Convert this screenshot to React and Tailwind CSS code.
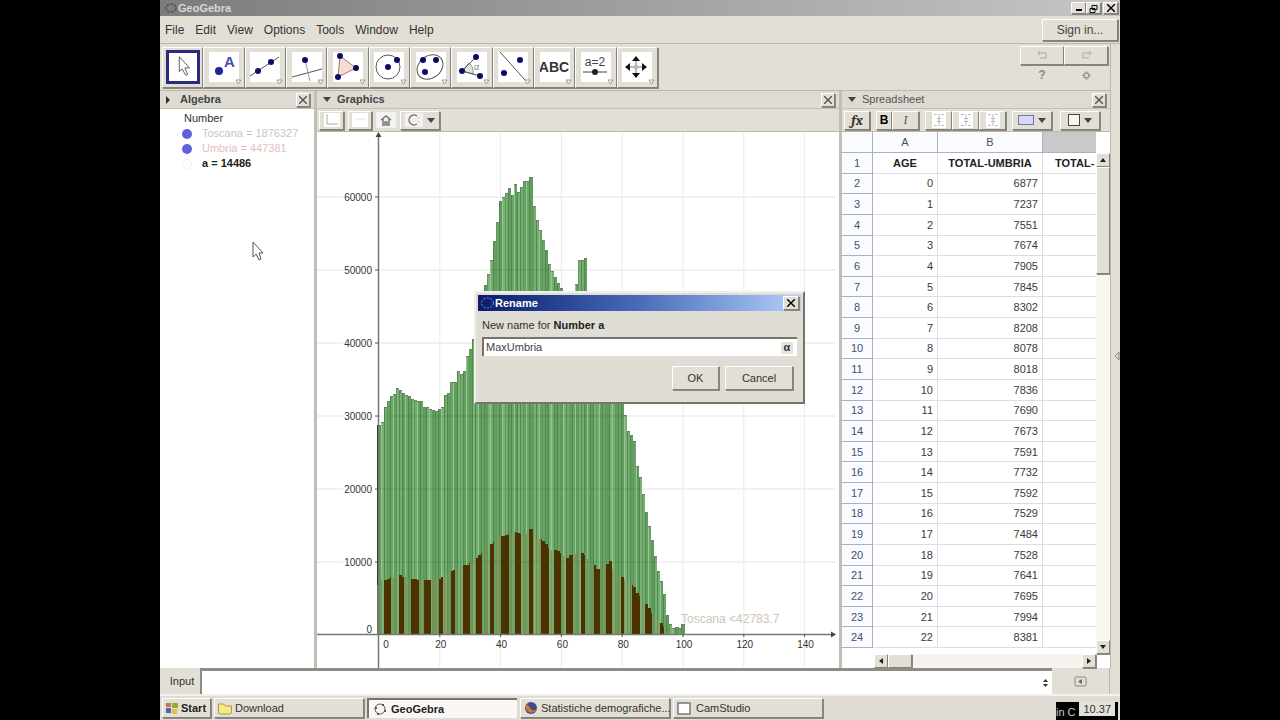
import { useState } from 'react'

const BTN = 'border border-t-white border-l-white border-r-[#858178] border-b-[#858178] bg-[#e2dfd7] shadow-[1px_1px_0_#8d897f]'

const MENUS = ['File', 'Edit', 'View', 'Options', 'Tools', 'Window', 'Help']

// residents per year of age, in thousands
const TOSCANA = [
  28.7, 29.2, 31.3, 32, 32.7, 33, 33.9, 33.6, 33.1, 32.9, 32.8, 32.3, 32.2, 32.1, 32, 31.2, 31.2, 31, 30.8, 30.7,
  31, 31.3, 32.9, 33.2, 34.7, 34.7, 36.2, 35.8, 36.2, 38.2, 39.2, 40.6, 42.5, 44.5, 46.2, 48, 49.4, 51.4, 54, 56.6,
  59.5, 60, 60.6, 61.2, 60.3, 61.8, 60.7, 61.4, 62.2, 62.2, 62.8, 58.7, 56.8, 55.5, 54.1, 52.7, 50.8, 49.8, 49, 48.2,
  47.5, 46, 44, 43, 45, 48.1, 51.4, 51.4, 51.6, 47, 45, 43, 42, 41, 42, 41, 40, 39, 38, 36,
  34, 30.1, 28, 27.4, 26.6, 23.2, 21.6, 19.3, 16.8, 14.9, 13, 10.8, 8.7, 7.4, 5.6, 2.7, 1.5, 1, 1.1, 0.9, 1.5,
]

const UMBRIA = [
  6.9, 7.5, 7.6, 7.7, 7.9, 7.8, 8.1, 8.2, 8, 7.9, 7.8, 7.7, 7.7, 7.6, 7.7, 7.6, 7.5, 7.5, 7.5, 7.6,
  7.7, 8, 8.4, 8.4, 8.7, 8.9, 9.1, 9.3, 9.6, 9.6, 9.8, 10.2, 10.5, 10.9, 11.2, 11.6, 12.1, 12.5, 12.8, 13.2,
  13.5, 13.6, 13.7, 13.8, 13.9, 14.1, 14, 13.8, 13.7, 13.9, 14.5, 13.5, 13.3, 13.1, 12.9, 12.4, 11.9, 11.7, 11.6, 11.5,
  11.3, 10.8, 10.6, 10.9, 11, 11.1, 11.3, 11.3, 10.9, 10.4, 10, 9.6, 9, 9.1, 9.2, 9.7, 10.1, 9, 8.6, 8.3,
  8, 7.6, 7.2, 6.9, 6.6, 5.7, 5.3, 4.8, 4.3, 3.7, 3, 2.6, 2.1, 1.7, 1.1, 0.6, 0.3, 0.2, 0.2, 0.1, 0.1,
]

// age ranges where the Umbria bars are solid
const SOLID = [
  [1.6, 4.1], [6.7, 8.1], [10.6, 13.2], [14.8, 17.2], [19.7, 21.2], [23.8, 25.1], [27.7, 29.8], [31.8, 33.9],
  [36.5, 37.9], [40.2, 42.9], [44.6, 46.8], [49.5, 50.8], [53.4, 55.8], [57.6, 60], [61.5, 63.9], [66.6, 67.9],
  [70.6, 72.7], [74.7, 76.6], [79.5, 80.6], [83.3, 85.7], [87.6, 89.7], [92.5, 93.7],
]

// gridlines that show through the bars: [thousands, first age, last age]
const OVERLAY = [[10, 0, 91], [20, 0, 86], [30, 2, 81], [40, 31, 56], [50, 37, 56]]

const GREENS = ['#619c5e', '#76ac71', '#6ca569', '#7bb076', '#649e61']

const SHEET = [
  6877, 7237, 7551, 7674, 7905, 7845, 8302, 8208, 8078, 8018, 7836, 7690, 7673, 7591, 7732, 7592, 7529, 7484, 7528,
  7641, 7695, 7994, 8381,
]

const px = (age) => 62 + age * 3.04
const py = (k) => 503 - k * 7.3

const NAVY = '#0c0c66'
const Dot = ({ x, y, r = 3, fill = NAVY }) => <circle cx={x} cy={y} r={r} fill={fill} />
const Ln = ({ d, stroke = '#555' }) => <path d={d} stroke={stroke} fill="none" />

const TOOLS = [
  { name: 'Move', icon: <path d="M11 5v16l3-3 4 7 2-1-3-7h5z" fill="#fff" stroke="#555" /> },
  {
    name: 'Point',
    icon: (
      <>
        <Dot x={10} y={20} r={4} fill="#22229a" />
        <text x={15} y={16} fontSize={15} fontWeight="bold" fill="#4a4ab0">A</text>
      </>
    ),
  },
  { name: 'Line', icon: <><Ln d="M0 25L29 6" /><Dot x={8} y={20} /><Dot x={21} y={11} /></> },
  { name: 'Perpendicular Line', icon: <><Ln d="M0 26L30 18" /><Ln d="M13 9l5 21" stroke="#999" /><Dot x={13} y={9} /></> },
  {
    name: 'Polygon',
    icon: (
      <>
        <path d="M7 5l16 12L5 26z" fill="#f5ddd0" stroke="#997b70" />
        <Dot x={7} y={5} /><Dot x={23} y={17} /><Dot x={5} y={26} />
      </>
    ),
  },
  { name: 'Circle', icon: <><circle cx={14} cy={16} r={12} fill="none" stroke="#555" /><Dot x={14} y={16} /><Dot x={23} y={9} /></> },
  {
    name: 'Conic',
    icon: (
      <>
        <ellipse cx={14} cy={16} rx={14} ry={11} fill="none" stroke="#555" transform="rotate(-38 14 16)" />
        <Dot x={7} y={9} /><Dot x={20} y={9} /><Dot x={9} y={21} />
      </>
    ),
  },
  {
    name: 'Angle',
    icon: (
      <>
        <path d="M5 20l7-8q5 4 4 11z" fill="#dfe8df" stroke="#8a9a8a" />
        <Ln d="M19 6L5 20l18 5" />
        <text x={17} y={19} fontSize={9} fill="#888">α</text>
        <Dot x={19} y={6} /><Dot x={5} y={20} /><Dot x={23} y={25} />
      </>
    ),
  },
  { name: 'Reflect', icon: <><Ln d="M2 1l25 28" /><Dot x={22} y={9} /><Dot x={6} y={22} /></> },
  { name: 'Text', icon: <text x={14} y={21} fontSize={14} fontWeight="bold" textAnchor="middle" fill="#333">ABC</text> },
  {
    name: 'Slider',
    icon: (
      <>
        <text x={14} y={15} fontSize={12} textAnchor="middle" fill="#444">a=2</text>
        <Ln d="M2 21h24" stroke="#444" />
        <Dot x={14} y={21} fill="#222" />
      </>
    ),
  },
  {
    name: 'Move Graphics View',
    icon: (
      <>
        <Ln d="M14 8v16M6 16h16" stroke="#777" />
        <path d="M14 5l4 5h-8zM14 27l4-5h-8zM3 16l5-4v8zM25 16l-5-4v8z" fill="#111" />
        <rect x={12} y={14} width={4} height={4} fill="#bbb" />
      </>
    ),
  },
]

function Cross({ size = 8, className = '' }) {
  return (
    <svg width={size} height={size} viewBox="0 0 8 8" className={className}>
      <path d="M0 0l8 8M8 0L0 8" stroke="currentColor" strokeWidth="1.4" />
    </svg>
  )
}

function Caret({ className = '' }) {
  return (
    <svg width="8" height="5" viewBox="0 0 8 5" className={className}>
      <path d="M0 0h8L4 5z" fill="#444" />
    </svg>
  )
}

function PanelHeader({ title, bold, closed }) {
  return (
    <div className="flex h-[18px] shrink-0 items-center border-b border-[#c4c0b7] bg-[#dedbd3] px-1">
      <span className="flex w-4 items-center pl-0.5">
        {closed ? <svg width="5" height="8"><path d="M0 0l4 4-4 4z" fill="#333" /></svg> : <Caret />}
      </span>
      <h2 className={bold ? 'flex-1 text-[11px] font-bold text-[#444]' : 'flex-1 text-[11px] text-[#555]'}>{title}</h2>
      <button aria-label={`Close ${title}`} className={`flex size-3.5 items-center justify-center text-[#555] ${BTN}`}>
        <Cross />
      </button>
    </div>
  )
}

function ToolButton({ label, className, children }) {
  return (
    <button aria-label={label} className={`flex h-[19px] items-center justify-center gap-1 ${BTN} ${className}`}>
      {children}
    </button>
  )
}

function Chart() {
  return (
    <svg className="block h-full w-full" fontSize="10" fill="#333">
      {[20, 40, 60, 80, 100, 120, 140].map((a) => (
        <path key={a} d={`M${px(a)} 0v537`} stroke="#ececec" />
      ))}
      {[10, 20, 30, 40, 50, 60].map((k) => (
        <path key={k} d={`M0 ${py(k)}h26M61 ${py(k)}h458`} stroke="#e4e4e4" />
      ))}
      <g shapeRendering="crispEdges">
        {TOSCANA.map((k, n) => (
          <g key={n}>
            <rect x={px(n - 0.5)} y={py(k)} width={3.1} height={k * 7.3} fill={GREENS[(n * 3) % 5]} />
            <rect x={px(n - 0.5)} y={py(k)} width={1} height={k * 7.3} fill={n % 4 === 1 ? '#93c98c' : n % 3 ? '#4d8a4b' : '#5f9a5c'} />
            <rect x={px(n - 0.5)} y={py(k)} width={3.1} height={1} fill="#6f7f6c" />
          </g>
        ))}
        <rect x={60} y={py(28.7)} width={2} height={28.7 * 7.3} fill="#12300f" />
        {UMBRIA.map((k, n) => (
          <rect key={n} x={px(n - 0.5)} y={py(k)} width={1} height={k * 7.3} fill="#8a8448" opacity={0.8} />
        ))}
        {SOLID.map(([from, to]) =>
          UMBRIA.map((k, n) => {
            const a = Math.max(from, n - 0.5)
            const b = Math.min(to, n + 0.5)
            if (b <= a) return null
            return <rect key={n} x={px(a)} y={py(k)} width={px(b) - px(a)} height={k * 7.3} fill="#4b3200" />
          }),
        )}
      </g>
      {OVERLAY.map(([k, from, to]) => (
        <path key={k} d={`M${px(from)} ${py(k)}H${px(to)}`} stroke="#2a5a2a" opacity={0.2} />
      ))}
      <path d="M61.5 2v535M0 502.5h516" stroke="#777" strokeWidth="1.5" fill="none" />
      <path d="M61.5 0l3 5h-6zM519 502.5l-5-3v6z" fill="#444" />
      {[10, 20, 30, 40, 50, 60].map((k) => (
        <g key={k}>
          <path d={`M58 ${py(k)}h4`} stroke="#555" />
          <text x={55} y={py(k) + 4} textAnchor="end">{k * 1000}</text>
        </g>
      ))}
      <text x={55} y={501} textAnchor="end">0</text>
      <text x={69} y={516} textAnchor="middle">0</text>
      {[20, 40, 60, 80, 100, 120, 140].map((a) => (
        <g key={a}>
          <path d={`M${px(a)} 502v3`} stroke="#555" />
          <text x={px(a) + 1} y={516} textAnchor="middle">{a}</text>
        </g>
      ))}
      <text x={364} y={491} fontSize="12" fill="#cdc5b8">{'Toscana <42783.7'}</text>
    </svg>
  )
}

function Algebra() {
  return (
    <section className="flex w-[154px] shrink-0 flex-col bg-white">
      <PanelHeader title="Algebra" bold closed />
      <ul className="pt-0.5 text-[11px] leading-[15px]">
        <li className="pl-6 text-[#333]">Number</li>
        <li className="flex items-center gap-2.5 pl-[22px] text-[#c6c6c6]">
          <span className="size-2.5 rounded-full bg-[#5f5fe0]" />Toscana = 1876327
        </li>
        <li className="flex items-center gap-2.5 pl-[22px] text-[#e8bcbc]">
          <span className="size-2.5 rounded-full bg-[#5f5fe0]" />Umbria = 447381
        </li>
        <li className="flex items-center gap-2.5 pl-[22px] font-bold text-[#222]">
          <span className="size-2.5 rounded-full border border-dotted border-[#ddd]" />a = 14486
        </li>
      </ul>
    </section>
  )
}

function Graphics() {
  return (
    <section className="flex min-w-0 flex-1 flex-col">
      <PanelHeader title="Graphics" bold />
      <div className="flex h-[23px] shrink-0 items-center border-b border-[#bbb7ae] px-0.5">
        <ToolButton label="Axes" className="w-[25px]">
          <svg width="16" height="14" className="bg-white"><path d="M3 1v10h11" stroke="#aaa" fill="none" /></svg>
        </ToolButton>
        <ToolButton label="Grid" className="ml-1 w-6">
          <svg width="16" height="14" className="bg-white"><path d="M3 6h11" stroke="#e5e5e5" fill="none" /></svg>
        </ToolButton>
        <button aria-label="Standard view" className="ml-1 flex h-4 w-5 items-center justify-center bg-[#f4f2ee]">
          <svg width="12" height="12" viewBox="0 0 12 12">
            <path d="M1 6l5-4 5 4M3 5v6h2V8h2v3h2V5" stroke="#777" strokeWidth="1.5" fill="none" />
          </svg>
        </button>
        <ToolButton label="Point capturing" className="ml-1 w-10">
          <svg width="18" height="14" className="bg-[#f4f2ee]">
            <path d="M12 3a5 5 0 1 0 0 8" stroke="#777" strokeWidth="1.5" fill="none" />
            <path d="M12 5h3M12 9h3" stroke="#ccc" />
          </svg>
          <Caret />
        </ToolButton>
      </div>
      <div className="min-h-0 flex-1 bg-white">
        <Chart />
      </div>
    </section>
  )
}

function AlignIcon() {
  return (
    <svg width="14" height="16" className="bg-white">
      <path d="M2 2.5h3M9 2.5h3M5 6.5h4M5 9.5h4M2 13.5h3M9 13.5h3M7 2v12" stroke="#bbb" />
    </svg>
  )
}

function Spreadsheet() {
  const cell = 'border-b border-r border-[#dcdce2] p-0'
  const head = 'border-b border-r border-[#a9b0cc] bg-[#fafbff] p-0 font-normal text-[#44506c]'
  return (
    <section className="flex w-[268px] shrink-0 flex-col">
      <PanelHeader title="Spreadsheet" />
      <div className="flex h-[23px] shrink-0 items-center border-b border-[#bbb7ae] pl-0.5">
        <ToolButton label="Function" className="w-[26px] font-serif text-[14px] font-bold italic text-[#333]">fx</ToolButton>
        <ToolButton label="Bold" className="ml-1.5 w-4 text-xs font-bold text-black">B</ToolButton>
        <ToolButton label="Italic" className="w-[27px] font-serif text-xs italic text-[#555]">I</ToolButton>
        <ToolButton label="Align left" className="ml-1.5 w-[27px]"><AlignIcon /></ToolButton>
        <ToolButton label="Align centre" className="w-[27px]"><AlignIcon /></ToolButton>
        <ToolButton label="Align right" className="w-[27px]"><AlignIcon /></ToolButton>
        <ToolButton label="Background colour" className="ml-1.5 w-10">
          <span className="h-2.5 w-4 border border-[#777799] bg-[#d6d6fa]" /><Caret />
        </ToolButton>
        <ToolButton label="Borders" className="ml-2 w-10">
          <span className="size-3 border border-[#444] bg-[#f8f8f0]" /><Caret />
        </ToolButton>
      </div>
      <div className="flex min-h-0 flex-1 bg-white">
        <div className="flex min-w-0 flex-1 flex-col">
          <table className="h-[516px] w-full table-fixed border-separate border-spacing-0 text-[11px] leading-3 text-[#3a3a3a]">
            <colgroup>
              <col className="w-[31px]" />
              <col className="w-[65px]" />
              <col className="w-[105px]" />
              <col />
            </colgroup>
            <thead>
              <tr className="h-[21px]">
                <th className={head} />
                <th className={head}>A</th>
                <th className={head}>B</th>
                <th className="border-b border-[#a9b0cc] bg-[#c9c9c9] p-0" />
              </tr>
            </thead>
            <tbody>
              <tr className="font-bold text-[#222]">
                <th className={head}>1</th>
                <td className={`${cell} text-center`}>AGE</td>
                <td className={`${cell} text-center`}>TOTAL-UMBRIA</td>
                <td className="border-b border-[#dcdce2] p-0 pl-3">TOTAL-</td>
              </tr>
              {SHEET.map((total, age) => (
                <tr key={age}>
                  <th className={head}>{age + 2}</th>
                  <td className={`${cell} pr-1 text-right`}>{age}</td>
                  <td className={`${cell} pr-1 text-right`}>{total}</td>
                  <td className="border-b border-[#dcdce2] p-0" />
                </tr>
              ))}
            </tbody>
          </table>
          <div className="mt-auto ml-8 flex h-3.5 bg-[#f6f3ee]">
            <button aria-label="Scroll left" className={`flex w-3.5 items-center justify-center ${BTN}`}>
              <svg width="4" height="6"><path d="M4 0v6L0 3z" fill="#222" /></svg>
            </button>
            <span className={`w-6 ${BTN}`} />
            <button aria-label="Scroll right" className={`ml-auto flex w-3.5 items-center justify-center ${BTN}`}>
              <svg width="4" height="6"><path d="M0 0v6l4-3z" fill="#222" /></svg>
            </button>
          </div>
        </div>
        <div className="mt-[21px] mb-3.5 flex w-3.5 shrink-0 flex-col bg-[#f9f5f1]">
          <button aria-label="Scroll up" className={`flex h-3.5 items-center justify-center ${BTN}`}>
            <svg width="6" height="4"><path d="M0 4h6L3 0z" fill="#222" /></svg>
          </button>
          <span className={`h-[107px] ${BTN}`} />
          <button aria-label="Scroll down" className={`mt-auto flex h-3.5 items-center justify-center ${BTN}`}>
            <svg width="6" height="4"><path d="M0 0h6L3 4z" fill="#222" /></svg>
          </button>
        </div>
      </div>
    </section>
  )
}

function RenameDialog() {
  const [name, setName] = useState('MaxUmbria')
  return (
    <div
      role="dialog"
      aria-label="Rename"
      className="absolute top-[291px] left-[314px] w-[331px] border-2 border-t-[#f1efea] border-l-[#f1efea] border-r-[#77736b] border-b-[#77736b] bg-[#e0ddd5] p-0.5"
    >
      <div className="flex h-4 items-center bg-linear-to-r from-[#0a1a6c] via-[#4a6cb8] to-[#b4cffa] pr-0.5 pl-0.5">
        <svg width="15" height="12" viewBox="0 0 14 12">
          <ellipse cx="7" cy="6" rx="6" ry="5" fill="none" stroke="#8a9ad8" strokeDasharray="2 1.5" />
        </svg>
        <span className="flex-1 text-[11px] font-bold text-white">Rename</span>
        <button aria-label="Close" className={`flex h-3.5 w-4 items-center justify-center text-black ${BTN}`}><Cross /></button>
      </div>
      <div className="px-1 pt-1.5 pb-2.5 text-[11px]">
        <label htmlFor="new-name" className="block leading-4 text-[#333]">
          New name for <b className="text-[#222]">Number a</b>
        </label>
        <div className="mt-1 flex h-[19px] items-center border-t-2 border-l-2 border-[#77736b] bg-white pr-1">
          <input
            id="new-name"
            value={name}
            onChange={(e) => setName(e.target.value)}
            className="min-w-0 flex-1 pl-0.5 text-[11px] text-[#444] outline-none"
          />
          <button aria-label="Symbols" className="flex h-3 w-3 items-center justify-center bg-[#e4e4e4] font-bold text-[#333]">α</button>
        </div>
        <div className="mt-2.5 flex justify-end gap-1.5 pr-1 text-[#333]">
          <button className={`h-6 w-[47px] ${BTN}`}>OK</button>
          <button className={`h-6 w-[68px] ${BTN}`}>Cancel</button>
        </div>
      </div>
    </div>
  )
}

function Task({ label, icon, active }) {
  return (
    <button
      className={
        active
          ? 'flex h-5 w-[150px] items-center gap-1 border-t-2 border-l-2 border-[#77736b] bg-[#faf8f4] pl-1 font-bold text-[#222]'
          : `flex h-5 w-[150px] items-center gap-0.5 pl-0.5 text-[#333] ${BTN}`
      }
    >
      {icon}
      <span className="whitespace-nowrap">{label}</span>
    </button>
  )
}

function Taskbar() {
  return (
    <footer className="flex h-[26px] shrink-0 items-center gap-[3px] border-t-2 border-[#f5f2ec] bg-[#e0dcd5] pl-0.5 text-[11px]">
      <button className={`flex h-5 w-[49px] items-center gap-0.5 pl-0.5 font-bold text-[#222] ${BTN}`}>
        <svg width="14" height="14" viewBox="0 0 14 14">
          <path d="M1 2h5v4H1z" fill="#c9713f" /><path d="M7 2h6v5H7z" fill="#8fae36" />
          <path d="M1 7h5v5H1z" fill="#4668ae" /><path d="M7 8h5v5H7z" fill="#e0c23f" />
        </svg>
        Start
      </button>
      <Task
        label="Download"
        icon={
          <svg width="16" height="13" viewBox="0 0 15 13">
            <path d="M1 2h5l2 2h6v7l-2 1H2l-1-1z" fill="#f4e88a" stroke="#b39b3c" />
          </svg>
        }
      />
      <Task
        active
        label="GeoGebra"
        icon={
          <svg width="14" height="14" viewBox="0 0 14 14">
            <circle cx="7" cy="7" r="5" fill="none" stroke="#555" />
            <path d="M2 5h2v2H2zM9 2h2v2H9zM11 8h2v2h-2zM4 11h2v2H4z" fill="#555" />
          </svg>
        }
      />
      <Task
        label="Statistiche demografiche..."
        icon={
          <svg width="16" height="14" viewBox="0 0 14 14" className="shrink-0">
            <circle cx="7" cy="7" r="6" fill="#3f4f86" />
            <path d="M2 3a6 6 0 1 0 11 5c-2 2-6 2-7-1S4 5 2 3z" fill="#d27a35" />
          </svg>
        }
      />
      <Task
        label="CamStudio"
        icon={
          <svg width="18" height="13" viewBox="0 0 18 13">
            <rect x="2" y="1" width="12" height="11" fill="#fff" stroke="#777" strokeWidth="1.5" />
          </svg>
        }
      />
      <div className="mt-1.5 mr-0.5 ml-auto flex h-5 w-[62px] items-start justify-between self-start bg-black pr-[3px]">
        <span className="pt-1 text-[11px] leading-3 whitespace-nowrap text-[#ccc]">in C</span>
        <time className="bg-[#e4e1d9] px-1 leading-[14px] text-[#333]">10.37</time>
      </div>
    </footer>
  )
}

export default function App() {
  return (
    <div className="h-screen bg-black font-['Liberation_Sans',Arial,sans-serif]">
      <div className="relative mx-auto flex h-full w-3/4 flex-col overflow-hidden bg-[#e2dfd7]">
        <header className="flex h-4 shrink-0 items-center bg-linear-to-r from-[#7c7c7c] to-[#c6c6c8] pr-0.5 pl-1 text-[11px] font-bold text-[#d8d8d8]">
          <svg width="14" height="12" viewBox="0 0 14 12">
            <ellipse cx="7" cy="6" rx="5" ry="4" fill="none" stroke="#555" strokeWidth="1.5" strokeDasharray="3 1" />
          </svg>
          <span className="flex-1">GeoGebra</span>
          <button aria-label="Minimize" className={`flex h-3 w-[15px] items-end justify-center pb-0.5 ${BTN}`}>
            <span className="h-0.5 w-1.5 bg-black" />
          </button>
          <button aria-label="Restore" className={`flex h-3 w-[15px] items-center justify-center ${BTN}`}>
            <svg width="9" height="9">
              <path d="M3 1.5h5v4H3zM1 4.5h5v4H1z" stroke="#111" fill="#ddd" />
            </svg>
          </button>
          <button aria-label="Close" className={`ml-0.5 flex h-3 w-[15px] items-center justify-center text-black ${BTN}`}>
            <Cross />
          </button>
        </header>

        <nav className="flex h-7 shrink-0 items-center gap-[11px] border-b border-[#bcb8ae] pr-0.5 pl-[5px] text-xs text-[#333]">
          {MENUS.map((m) => (
            <button key={m}>{m}</button>
          ))}
          <button className={`ml-auto h-[22px] w-[76px] text-[#444] ${BTN}`}>Sign in...</button>
        </nav>

        <div className="flex min-h-0 flex-1">
          <div className="flex min-w-0 flex-1 flex-col">
            <div className="flex h-[47px] shrink-0 items-center justify-between border-b border-[#bcb8ae] pr-0.5 pl-0.5">
              <div className="flex w-[496px]">
                {TOOLS.map((t, i) => (
                  <button
                    key={t.name}
                    aria-label={t.name}
                    className={`relative flex h-[41px] flex-1 items-center justify-center ${BTN}`}
                  >
                    <svg
                      width="34"
                      height="34"
                      viewBox="0 1 30 30"
                      className={i === 0 ? 'border-[3px] border-[#2b2b7c] bg-white' : 'border-2 border-[#e2dfd7] bg-white'}
                    >
                      {t.icon}
                    </svg>
                    {i > 0 && (
                      <svg width="7" height="6" className="absolute right-0.5 bottom-0.5">
                        <path d="M1 1h5L3.500 5z" fill="#fff" stroke="#999" />
                      </svg>
                    )}
                  </button>
                ))}
              </div>
              <div className="grid w-[88px] grid-cols-2 self-start pt-0.5 text-xs text-[#888]">
                <button aria-label="Undo" className={`flex h-[19px] items-center justify-center ${BTN}`}>
                  <svg width="11" height="9"><path d="M3 0L1 2l2 2M1 2h8v5H3" stroke="#aaa" fill="none" /></svg>
                </button>
                <button aria-label="Redo" className={`flex h-[19px] items-center justify-center ${BTN}`}>
                  <svg width="11" height="9"><path d="M8 0l2 2-2 2M10 2H2v5h6" stroke="#aaa" fill="none" /></svg>
                </button>
                <button aria-label="Help" className="h-5 font-bold">?</button>
                <button aria-label="Preferences" className="flex h-5 items-center justify-center">
                  <svg width="9" height="9" viewBox="0 0 9 9">
                    <circle cx="4.500" cy="4.500" r="2.500" fill="none" stroke="#999" strokeWidth="1.500" />
                    <path d="M4.500 0v2M4.500 7v2M0 4.500h2M7 4.500h2" stroke="#999" />
                  </svg>
                </button>
              </div>
            </div>

            <main className="flex min-h-0 flex-1 gap-[3px] bg-[#c2beb5]">
              <Algebra />
              <div className="flex min-w-0 flex-1 bg-[#e2dfd7]"><Graphics /></div>
              <div className="flex bg-[#e2dfd7]"><Spreadsheet /></div>
            </main>
          </div>
          <aside className="flex w-2.5 shrink-0 items-center justify-end border-l border-[#bcb8ae]">
            <svg width="6" height="10"><path d="M5 1v8L1 5z" fill="#ddd" stroke="#888" /></svg>
          </aside>
        </div>

        <div className="flex h-[26px] shrink-0 items-stretch pr-2.5 text-[11px]">
          <label htmlFor="cmd" className="flex w-10 items-center justify-center pl-1 text-[#333]">Input</label>
          <div className="flex flex-1 items-center border-t-[3px] border-l-2 border-[#8e8b86] bg-white pr-1">
            <input id="cmd" className="min-w-0 flex-1 px-1 outline-none" />
            <button aria-label="History">
              <svg width="5" height="10"><path d="M0 4l2.500-3L5 4zM0 6l2.500 3L5 6z" fill="#333" /></svg>
            </button>
          </div>
          <button aria-label="Input help" className="flex w-[58px] items-center justify-center border-r border-[#bcb8ae]">
            <svg width="13" height="11">
              <rect x="1" y="1" width="11" height="9" rx="1" fill="none" stroke="#888" />
              <path d="M8 3v5L4 5.500z" fill="#666" />
            </svg>
          </button>
        </div>
        <Taskbar />

        <svg width="12" height="20" viewBox="0 0 12 20" className="absolute top-[241px] left-[92px]">
          <path d="M1 1v15l3-3 3 6 2-1-2-6h4z" fill="#fff" stroke="#555" />
        </svg>
        <RenameDialog />
      </div>
    </div>
  )
}
